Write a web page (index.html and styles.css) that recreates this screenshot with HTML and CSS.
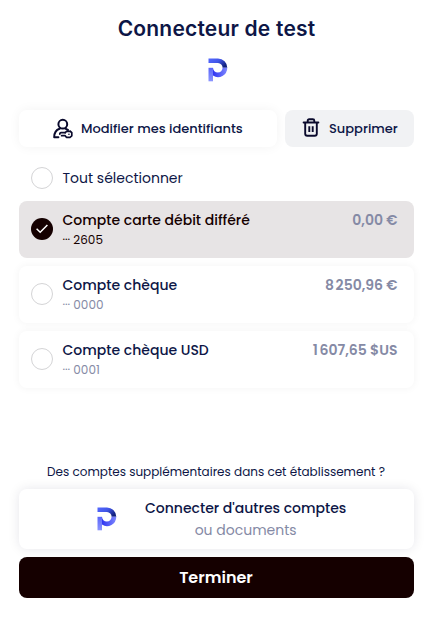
FILE: index.html
```html
<!DOCTYPE html>
<html lang="fr">
<head>
    <meta charset="UTF-8">
    <meta name="viewport" content="width=device-width, initial-scale=1.0">
    <title>Connecteur de test</title>
    <link rel="stylesheet" href="styles.css">
</head>
<body>
    <svg width="0" height="0" class="defs">
        <defs>
            <linearGradient id="top" x1="0" y1="0" x2="1" y2="0.6">
                <stop offset="0" stop-color="#5468ff"/>
                <stop offset="0.5" stop-color="#4257e8"/>
                <stop offset="1" stop-color="#10207c"/>
            </linearGradient>
            <linearGradient id="bowl" x1="0" y1="0" x2="1" y2="0">
                <stop offset="0" stop-color="#2f35f0"/>
                <stop offset="1" stop-color="#7f88ff"/>
            </linearGradient>
            <linearGradient id="stem" x1="0" y1="0" x2="0" y2="1">
                <stop offset="0" stop-color="#5a66fa"/>
                <stop offset="1" stop-color="#8b95ff"/>
            </linearGradient>
            <symbol id="logo" viewBox="0 0 20 24">
                <path d="M0.5 0.5H10A9.3 9.3 0 0 1 19.3 9.8H14.6A4.8 4.8 0 0 0 10 5H0.5Z" fill="url(#top)"/>
                <path d="M5 9.8A4.8 4.8 0 0 0 14.6 9.8H19.3A9.3 9.3 0 0 1 5 17.6Z" fill="url(#bowl)"/>
                <path d="M0.5 9.8H5V23.3H0.5Z" fill="url(#stem)"/>
            </symbol>
        </defs>
    </svg>

    <main class="page">
        <h1>Connecteur de test</h1>
        <svg class="logo" width="20" height="24"><use href="#logo"/></svg>

        <div class="actions">
            <button class="btn btn-edit">
                <svg width="22" height="22" viewBox="0 0 22 22" fill="none" stroke="#0a0a2c" stroke-width="2" stroke-linecap="round" stroke-linejoin="round">
                    <circle cx="10.8" cy="6.2" r="4.4"/>
                    <path d="M7.6 10.8C4 12 2.2 14.8 2.2 19.3H6.4"/>
                    <path d="M13.8 10.9L16 12"/>
                    <path d="M13.2 14.7H9.2Q7.6 14.9 7.8 16.2M9.6 17.7H13.2L14.4 19.3H18L19.8 17.8V14.6L18.4 13.4" stroke-width="1.7"/>
                    <path d="M13.2 14.7L14.6 13.4H18.4" stroke-width="1.7"/>
                    <path d="M16.9 16.3h.1" stroke-width="1.5"/>
                </svg>
                <span>Modifier mes identifiants</span>
            </button>
            <button class="btn btn-delete">
                <svg class="trash" width="18" height="20" viewBox="0 0 18 20" fill="none" stroke="#0a0a2c" stroke-width="1.9" stroke-linecap="round" stroke-linejoin="round">
                    <path d="M1.6 4.5H16.4M5.7 4.4V2.8Q5.7 1.3 7.2 1.3H10.8Q12.3 1.3 12.3 2.8V4.4M3.2 4.6V15.8Q3.2 17.7 5.3 17.7H12.7Q14.8 17.7 14.8 15.8V4.6"/>
                    <path d="M7.3 8.2V14M10.7 8.2V14" stroke-linecap="butt"/>
                </svg>
                <span>Supprimer</span>
            </button>
        </div>

        <div class="select-all">
            <span class="radio"></span>
            <span class="select-label">Tout sélectionner</span>
        </div>

        <ul class="accounts">
            <li class="account selected">
                <span class="radio checked">
                    <svg width="22" height="22" viewBox="0 0 22 22" fill="none" stroke="#fff" stroke-width="1.5"><path d="M5.6 10.7L9.2 14.2L16.4 7"/></svg>
                </span>
                <div class="account-info">
                    <span class="account-name">Compte carte débit différé</span>
                    <span class="account-number">··· 2605</span>
                </div>
                <span class="amount">0,00 €</span>
            </li>
            <li class="account">
                <span class="radio"></span>
                <div class="account-info">
                    <span class="account-name">Compte chèque</span>
                    <span class="account-number">··· 0000</span>
                </div>
                <span class="amount">8&#8239;250,96 €</span>
            </li>
            <li class="account">
                <span class="radio"></span>
                <div class="account-info">
                    <span class="account-name">Compte chèque USD</span>
                    <span class="account-number">··· 0001</span>
                </div>
                <span class="amount">1&#8239;607,65 $US</span>
            </li>
        </ul>

        <p class="more">Des comptes supplémentaires dans cet établissement ?</p>
        <button class="connect">
            <svg width="20" height="24"><use href="#logo"/></svg>
            <span class="connect-text">
                <span class="connect-title">Connecter d'autres comptes</span>
                <span class="connect-sub">ou documents</span>
            </span>
        </button>
        <button class="finish">Terminer</button>
    </main>
</body>
</html>
```
FILE: styles.css
```css
* {
    box-sizing: border-box;
}
body {
    margin: 0;
    background: #fff;
    color: #0d1646;
    font-family: Poppins, Inter, sans-serif;
    font-size: 14px;
}
button {
    border: none;
    padding: 0;
    font: inherit;
    color: inherit;
    cursor: pointer;
}
.defs {
    display: block;
}
.page {
    display: flex;
    flex-direction: column;
    height: 620px;
    padding: 14px 15px 22px 19px;
}
h1 {
    margin: 0;
    font-family: Inter, sans-serif;
    font-size: 21px;
    line-height: 30px;
    font-weight: 600;
    letter-spacing: 0.2px;
    text-align: center;
}
.logo {
    display: block;
    margin: 14px auto 28px;
    transform: translateX(1px);
}
.actions {
    display: grid;
    grid-template-columns: 258px 129px;
    gap: 8px;
}
.btn {
    display: flex;
    align-items: center;
    height: 37px;
    border-radius: 8px;
    font-size: 13px;
    font-weight: 500;
    white-space: nowrap;
}
.btn-edit {
    padding-left: 33px;
    gap: 7px;
    background: #fff;
    box-shadow: 0 0 12px rgba(0, 0, 0, 0.05);
}
.btn-delete {
    padding-left: 17px;
    gap: 9px;
    background: #f1f2f4;
}
.trash {
    margin-bottom: 2px;
}
.select-all {
    display: flex;
    align-items: center;
    gap: 9.5px;
    height: 54px;
    padding: 8px 12px 0;
}
.radio {
    flex: none;
    width: 22px;
    height: 22px;
    border: 1px solid #d4d4d6;
    border-radius: 50%;
    background: #fff;
}
.radio.checked {
    border: none;
    background: #150000;
}
.radio svg {
    display: block;
}
.accounts {
    display: flex;
    flex-direction: column;
    gap: 8px;
    margin: 0;
    padding: 0;
    list-style: none;
}
.account {
    display: flex;
    align-items: center;
    gap: 9.5px;
    height: 57px;
    padding: 0 16.5px 0 12px;
    border-radius: 8px;
    box-shadow: 0 0 8px rgba(0, 0, 0, 0.05);
}
.account .radio {
    margin-bottom: 1px;
}
.account.selected {
    background: #e7e4e5;
    color: #150000;
    box-shadow: none;
}
.account-info {
    display: flex;
    flex: 1;
    flex-direction: column;
}
.account-name {
    line-height: 21px;
    font-weight: 500;
}
.account-number {
    font-size: 12px;
    line-height: 18px;
    color: #858aa5;
}
.selected .account-number {
    color: #150000;
}
.amount {
    align-self: flex-start;
    padding-top: 9px;
    line-height: 21px;
    font-weight: 600;
    color: #858aa5;
}
.more {
    margin: auto 0 8px;
    padding-right: 1px;
    font-size: 12px;
    line-height: 18px;
    text-align: center;
}
.connect {
    display: flex;
    align-items: center;
    height: 60px;
    padding-left: 78px;
    gap: 28px;
    border-radius: 8px;
    background: #fff;
    box-shadow: 0 0 12px rgba(20, 20, 60, 0.1);
}
.connect-text {
    display: flex;
    flex-direction: column;
    align-items: center;
    line-height: 22px;
}
.connect-title {
    font-weight: 500;
}
.connect-sub {
    color: #858aa5;
}
.finish {
    height: 41px;
    margin-top: 8px;
    padding-right: 1px;
    border-radius: 8px;
    background: #150000;
    color: #fff;
    font-size: 16px;
    font-weight: 600;
}
```
